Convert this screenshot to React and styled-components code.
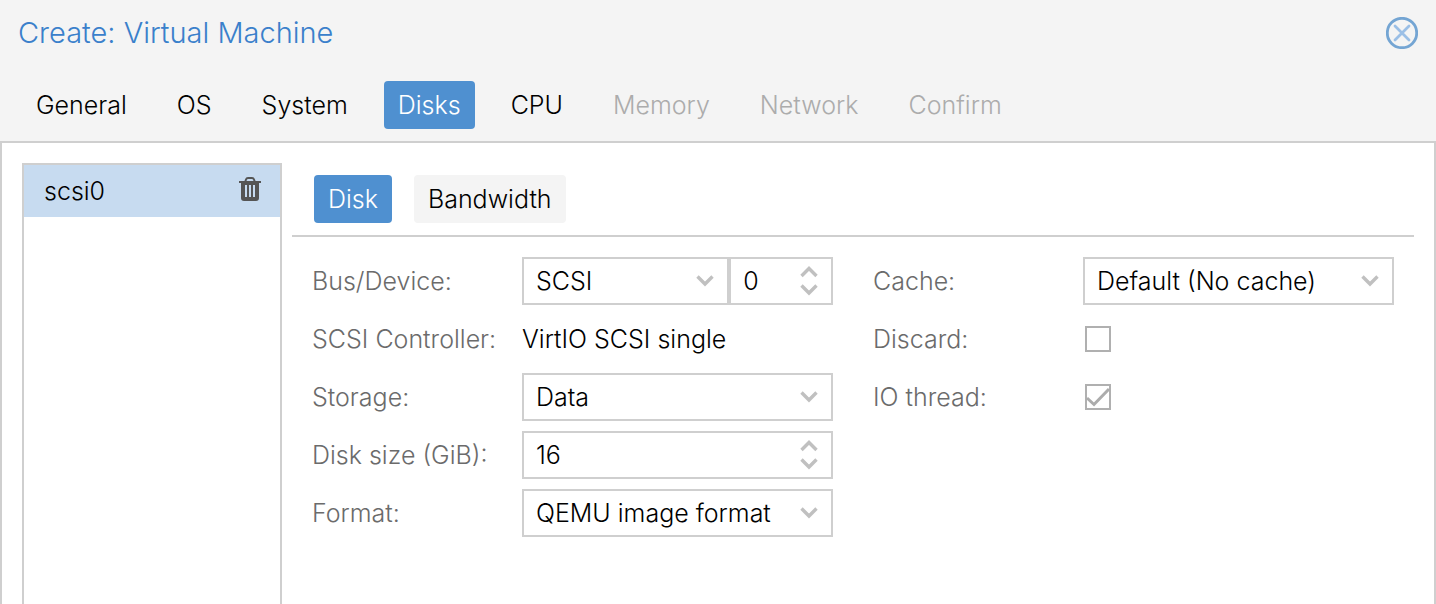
import React, { useState } from 'react';
import styled, { createGlobalStyle, css } from 'styled-components';

const line = '#cfcfcf';
const blue = '#4f90d0';

const GlobalStyle = createGlobalStyle`
  * { box-sizing: border-box; }
  body { margin: 0; background: #fff; }
  body, button, input, select {
    font-family: Inter, "Liberation Sans", sans-serif;
    font-size: 25px;
    font-weight: 300;
    line-height: 32px;
    color: #000;
  }
`;

const Window = styled.div`
  min-height: 100vh;
  display: flex;
  flex-direction: column;
`;

const Header = styled.header`
  background: #f4f4f4;
  border-bottom: 2px solid ${line};
`;

const TitleBar = styled.div`
  display: flex;
  align-items: center;
  justify-content: space-between;
  height: 65px;
  padding: 0 18px;
`;

const Title = styled.h1`
  margin: 0;
  font-size: 29px;
  font-weight: 300;
  color: #3a80cb;
`;

const IconButton = styled.button`
  display: flex;
  padding: 0;
  border: 0;
  background: none;
  cursor: pointer;
`;

const Tabs = styled.nav`
  display: flex;
  gap: 22px;
  padding: ${(p) => (p.$inner ? '12px 22px' : '16px 22px 12px')};
  ${(p) => p.$inner && css`border-bottom: 2px solid ${line};`}
`;

const Tab = styled.button`
  height: 48px;
  padding: 0 14px;
  border: 0;
  border-radius: 4px;
  white-space: nowrap;
  background: ${(p) => (p.$active ? blue : '#f4f4f4')};
  color: ${(p) => (p.$active ? '#fff' : '#000')};
  cursor: pointer;
  &:disabled { color: #acacac; cursor: default; }
`;

const Body = styled.main`
  flex: 1;
  display: flex;
  gap: 10px;
  padding: 20px 20px 0;
  border: solid ${line};
  border-width: 0 2px;
`;

const DiskList = styled.ul`
  width: 260px;
  margin: 0;
  padding: 0;
  list-style: none;
  border: 2px solid ${line};
  border-bottom: 0;
`;

const DiskItem = styled.li`
  display: flex;
  align-items: center;
  justify-content: space-between;
  height: 52px;
  padding: 0 19px 0 20px;
  background: #c7dbf0;
`;

const Panel = styled.section`
  flex: 1;
  min-width: 0;
`;

const Form = styled.form`
  display: grid;
  grid-template-columns: 1fr 1fr;
  gap: 40px;
  padding: 20px;
`;

const Column = styled.div`
  display: flex;
  flex-direction: column;
  gap: 10px;
`;

const Row = styled.div`
  display: grid;
  grid-template-columns: 210px 1fr;
  align-items: center;
  height: 48px;
  white-space: nowrap;
`;

const Label = styled.label`
  color: #6b6b6b;
`;

const Pair = styled.div`
  display: grid;
  grid-template-columns: 2fr 1fr;
`;

const Box = styled.div`
  display: grid;
  grid-template-columns: 1fr 44px;
  align-items: center;
  height: 48px;
  border: 2px solid ${line};
  background: #fff;
`;

const control = css`
  appearance: none;
  grid-area: 1 / 1 / 2 / 3;
  width: 100%;
  height: 44px;
  margin: 0;
  padding: 0 44px 0 12px;
  border: 0;
  border-radius: 0;
  outline: 0;
  background: none;
`;

const Select = styled.select`${control}`;

const NumberInput = styled.input`
  ${control}
  appearance: textfield;
  &::-webkit-inner-spin-button { appearance: none; margin: 0; }
`;

const Arrows = styled.div`
  grid-area: 1 / 2;
  display: flex;
  flex-direction: column;
  align-items: center;
  gap: 6px;
  pointer-events: ${(p) => (p.$spin ? 'auto' : 'none')};
`;

const CheckBox = styled.input`
  appearance: none;
  grid-area: 1 / 1;
  width: 26px;
  height: 26px;
  margin: 0;
  border: 2px solid #b0b0b0;
  background: #fff;
`;

const CheckWrap = styled.span`
  display: grid;
  width: 26px;
  margin-left: 2px;
`;

const Tick = styled.svg`
  grid-area: 1 / 1;
  pointer-events: none;
`;

const Chevron = ({ up }) => (
  <svg width="18" height="12" viewBox="0 0 18 12" fill="none" stroke="#c0c0c0" strokeWidth="3.4" aria-hidden="true">
    <path d={up ? 'M1.5 10L9 2.5L16.5 10' : 'M1.5 1.5L9 9L16.5 1.5'} />
  </svg>
);

const Combo = ({ id, label, value }) => (
  <Box>
    <Select id={id} aria-label={label} defaultValue={value}>
      <option>{value}</option>
    </Select>
    <Arrows><Chevron /></Arrows>
  </Box>
);

const Spinner = ({ id, label, initial }) => {
  const [value, setValue] = useState(initial);
  return (
    <Box>
      <NumberInput id={id} aria-label={label} type="number" value={value} onChange={(e) => setValue(Number(e.target.value))} />
      <Arrows $spin>
        <IconButton type="button" aria-label="Increase" onClick={() => setValue(value + 1)}><Chevron up /></IconButton>
        <IconButton type="button" aria-label="Decrease" onClick={() => setValue(Math.max(0, value - 1))}><Chevron /></IconButton>
      </Arrows>
    </Box>
  );
};

const Check = ({ id, initial }) => {
  const [on, setOn] = useState(initial);
  return (
    <CheckWrap>
      <CheckBox id={id} type="checkbox" checked={on} onChange={() => setOn(!on)} />
      {on && (
        <Tick width="26" height="26" viewBox="0 0 26 26" fill="none" stroke="#acacac" strokeWidth="3">
          <path d="M2 14L9 20.5L24 5" />
        </Tick>
      )}
    </CheckWrap>
  );
};

const Field = ({ id, label, children }) => (
  <Row>
    <Label htmlFor={id}>{label}</Label>
    {children}
  </Row>
);

const steps = [
  ['General'], ['OS'], ['System'], ['Disks', 'active'], ['CPU'],
  ['Memory', 'off'], ['Network', 'off'], ['Confirm', 'off'],
];

export default function App() {
  return (
    <Window>
      <GlobalStyle />
      <Header>
        <TitleBar>
          <Title>Create: Virtual Machine</Title>
          <IconButton type="button" aria-label="Close">
            <svg width="32" height="32" viewBox="0 0 32 32" fill="none">
              <circle cx="16" cy="16" r="14.7" stroke="#74a5d3" strokeWidth="2.8" />
              <path d="M9 9L23 23M23 9L9 23" stroke="#9bbfe6" strokeWidth="2.8" strokeLinecap="round" />
            </svg>
          </IconButton>
        </TitleBar>
        <Tabs>
          {steps.map(([name, state]) => (
            <Tab key={name} type="button" $active={state === 'active'} disabled={state === 'off'}>{name}</Tab>
          ))}
        </Tabs>
      </Header>
      <Body>
        <DiskList>
          <DiskItem>
            scsi0
            <IconButton type="button" aria-label="Remove disk">
              <svg width="22" height="28" viewBox="0 0 22 28">
                <path d="M6 5.5L7 2.5Q7.5 1 9 1H13Q14.5 1 15 2.5L16 5.5" fill="none" stroke="#555" strokeWidth="2" />
                <path fill="#555" fillRule="evenodd" d="M0 4H22V6H20V21Q20 24 17 24H5Q2 24 2 21V6H0ZM6 8V20H8V8ZM10 8V20H12V8ZM14 8V20H16V8Z" />
              </svg>
            </IconButton>
          </DiskItem>
        </DiskList>
        <Panel>
          <Tabs $inner>
            <Tab type="button" $active>Disk</Tab>
            <Tab type="button">Bandwidth</Tab>
          </Tabs>
          <Form>
            <Column>
              <Field id="bus" label="Bus/Device:">
                <Pair>
                  <Combo id="bus" value="SCSI" />
                  <Spinner label="Device number" initial={0} />
                </Pair>
              </Field>
              <Row>
                <Label as="span">SCSI Controller:</Label>
                <span>VirtIO SCSI single</span>
              </Row>
              <Field id="storage" label="Storage:"><Combo id="storage" value="Data" /></Field>
              <Field id="size" label="Disk size (GiB):"><Spinner id="size" initial={16} /></Field>
              <Field id="format" label="Format:"><Combo id="format" value="QEMU image format" /></Field>
            </Column>
            <Column>
              <Field id="cache" label="Cache:"><Combo id="cache" value="Default (No cache)" /></Field>
              <Field id="discard" label="Discard:"><Check id="discard" initial={false} /></Field>
              <Field id="iothread" label="IO thread:"><Check id="iothread" initial /></Field>
            </Column>
          </Form>
        </Panel>
      </Body>
    </Window>
  );
}
